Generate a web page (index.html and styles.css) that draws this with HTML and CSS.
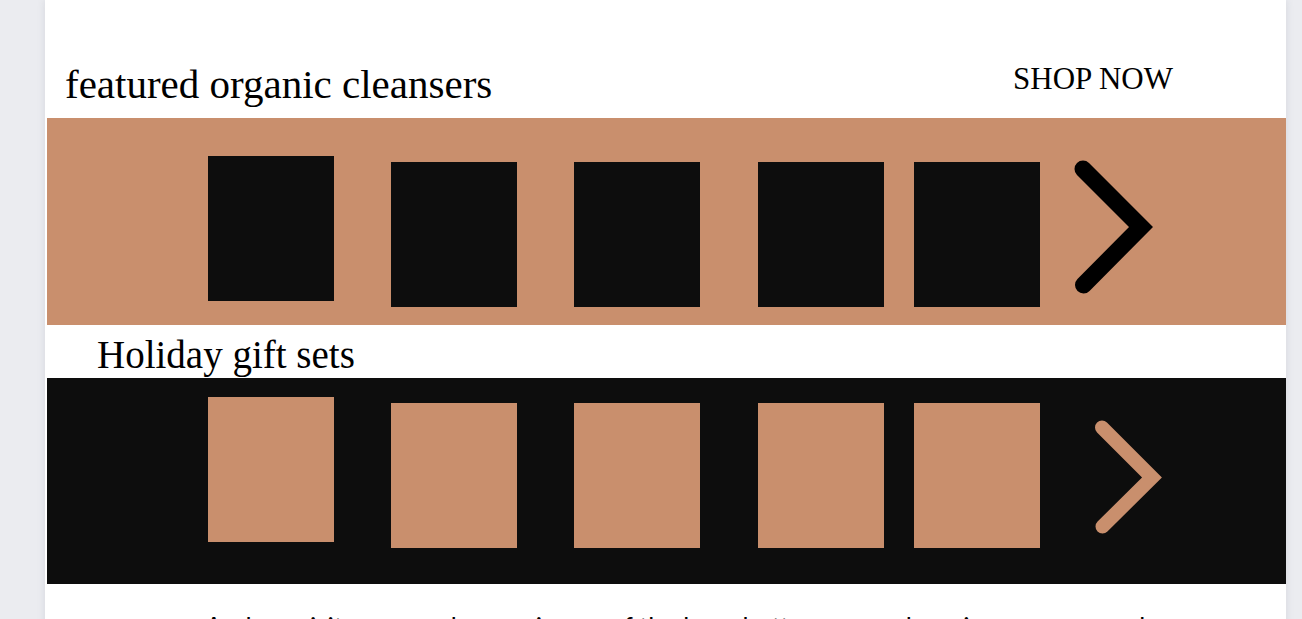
FILE: index.html
```html
<!DOCTYPE html>
<html lang="en">
<head>
<meta charset="utf-8">
<meta name="viewport" content="width=device-width, initial-scale=1">
<title>Organic cleansers</title>
<link rel="stylesheet" href="styles.css">
</head>
<body>
<main class="page">
  <header class="heading-row">
    <h1 class="title">featured organic cleansers</h1>
    <a class="shop-link" href="#cleansers">SHOP NOW</a>
  </header>
  <section class="band band-tan" id="cleansers" aria-label="Featured organic cleansers">
    <ul class="tiles">
      <li class="tile"></li><li class="tile"></li><li class="tile"></li><li class="tile"></li><li class="tile"></li>
    </ul>
    <button class="next" type="button" aria-label="Next cleansers">
      <svg class="arrow" width="80" height="134" viewBox="0 0 80 134"><path d="M9 9 67 67 9.500 125" fill="none" stroke="currentColor" stroke-width="17" stroke-linecap="round" stroke-linejoin="miter"/></svg>
    </button>
  </section>
  <h2 class="subtitle">Holiday gift sets</h2>
  <section class="band band-black" aria-label="Holiday gift sets">
    <ul class="tiles">
      <li class="tile"></li><li class="tile"></li><li class="tile"></li><li class="tile"></li><li class="tile"></li>
    </ul>
    <button class="next" type="button" aria-label="Next gift sets">
      <svg class="arrow" width="68" height="114" viewBox="0 0 68 114"><path d="M7 7.500 57 57.500 7.500 106.500" fill="none" stroke="currentColor" stroke-width="14" stroke-linecap="round" stroke-linejoin="miter"/></svg>
    </button>
  </section>
  <p class="copy">And requisite creams bars or in use of the base butters as our luxuries are seen on bar</p>
</main>
</body>
</html>
```
FILE: styles.css
```css
* { box-sizing: border-box; }
body {
  margin: 0;
  background: #ebecf0;
  color: #000;
  font-family: "Liberation Serif", serif;
}
.page {
  min-height: 100vh;
  margin: 0 16px 0 45px;
  background: #fff;
  box-shadow: 0 0 8px rgba(60, 65, 90, 0.12);
}
.heading-row {
  display: flex;
  justify-content: space-between;
  align-items: flex-start;
  padding: 60px 113px 10px 20px;
}
.title, .subtitle { margin: 0; font-weight: 400; }
.title { font-size: 41px; line-height: 48px; }
.subtitle { padding: 6px 20px 0 52px; font-size: 39px; line-height: 47px; }
.shop-link {
  margin-top: 1px;
  color: inherit;
  font-size: 31px;
  line-height: 36px;
  text-decoration: none;
}
.band {
  display: flex;
  align-items: flex-start;
  margin-left: 2px;
}
.band-tan { padding: 38px 0 18px 161px; background: #c98f6d; color: #000; }
.band-black { padding: 19px 0 36px 161px; background: #0d0d0d; color: #c98f6d; }
.tiles {
  display: flex;
  align-items: flex-start;
  margin: 0;
  padding: 0;
  list-style: none;
}
.tile { width: 126px; height: 145px; margin: 6px 57px 0 0; }
.tile:first-child { margin-top: 0; }
.tile:nth-child(3) { margin-right: 58px; }
.tile:nth-child(4) { margin-right: 30px; }
.tile:last-child { margin-right: 0; }
.band-tan .tile { background: #0d0d0d; }
.band-black .tile { background: #c98f6d; }
.next {
  display: block;
  margin: 0 0 0 34px;
  padding: 4px 0 0;
  border: 0;
  background: none;
  color: inherit;
  cursor: pointer;
}
.band-black .next { margin-left: 55px; padding-top: 23px; }
.arrow { display: block; }
.copy {
  margin: 0;
  padding: 25px 80px 0 160px;
  font-family: Lato, sans-serif;
  font-size: 26px;
  line-height: 36px;
}
```
